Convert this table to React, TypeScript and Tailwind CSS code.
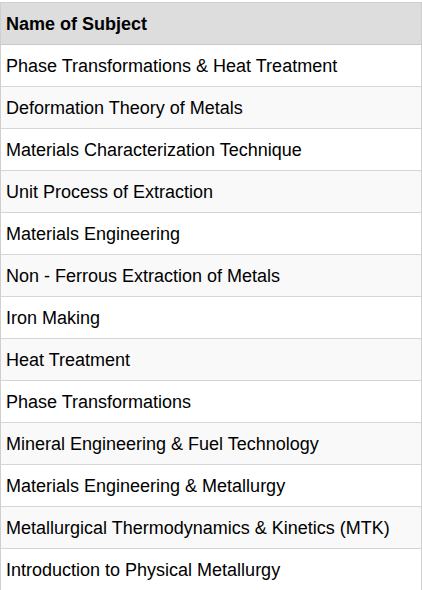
const SUBJECTS = [
  'Phase Transformations & Heat Treatment',
  'Deformation Theory of Metals',
  'Materials Characterization Technique',
  'Unit Process of Extraction',
  'Materials Engineering',
  'Non - Ferrous Extraction of Metals',
  'Iron Making',
  'Heat Treatment',
  'Phase Transformations',
  'Mineral Engineering & Fuel Technology',
  'Materials Engineering & Metallurgy',
  'Metallurgical Thermodynamics & Kinetics (MTK)',
  'Introduction to Physical Metallurgy',
];

export default function App() {
  return (
    <div className="w-[422px] h-[590px] overflow-hidden bg-white pt-[2px] font-['Liberation_Sans',Arial,sans-serif] text-[18px] text-black">
      <div className="border-l border-r border-t border-[#cfcfcf]">
        <div className="h-[42px] flex items-center px-[5px] pt-[2px] bg-[#dddddd] border-b border-[#c8c8c8] font-bold">
          Name of Subject
        </div>
        {SUBJECTS.map((s, i) => (
          <div
            key={s}
            className={`h-[42px] flex items-center px-[5px] pt-[2px] border-b border-[#d6d6d6] ${
              i % 2 === 1 ? 'bg-[#f9f9f9]' : 'bg-white'
            }`}
          >
            {s}
          </div>
        ))}
      </div>
    </div>
  );
}
